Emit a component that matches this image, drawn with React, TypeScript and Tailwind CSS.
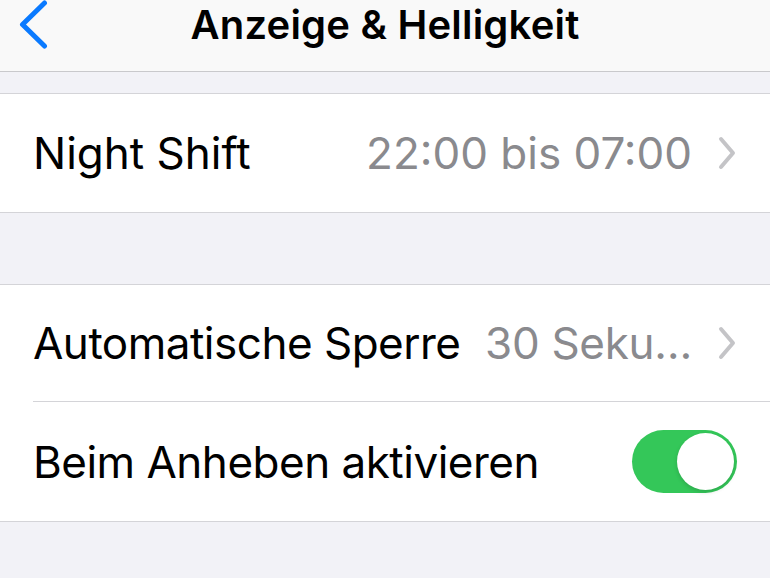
import React from "react";

function Chevron() {
  return (
    <svg width="20" height="34" viewBox="0 0 20 34" className="shrink-0">
      <path d="M4 3 L16 17 L4 31" fill="none" stroke="#c4c4c7" strokeWidth="4" strokeLinecap="round" strokeLinejoin="round" />
    </svg>
  );
}

export default function App() {
  return (
    <div className="w-[770px] h-[578px] overflow-hidden bg-[#f2f2f7] flex flex-col" style={{ fontFamily: "Inter, 'Noto Sans', sans-serif" }}>
      <div className="h-[72px] shrink-0 bg-[#f9f9f9] border-b border-[#c9c9cc] relative">
        <svg width="50" height="50" viewBox="0 0 50 50" className="absolute left-0 top-0">
          <path d="M44.5 3 L22.5 24.5 L44.5 46" fill="none" stroke="#0a7aff" strokeWidth="5" strokeLinecap="round" strokeLinejoin="round" />
        </svg>
        <div className="w-full text-center leading-[50px] text-[40px] font-semibold text-black tracking-[0.2px]">Anzeige &amp; Helligkeit</div>
      </div>
      <div className="h-[21px] shrink-0" />
      <div className="bg-white border-y border-[#d4d4d8] shrink-0">
        <div className="h-[118px] flex items-center pl-[33px] pr-[33px]">
          <span className="text-[44px] text-black tracking-[0px]">Night Shift</span>
          <span className="ml-auto text-[44px] text-[#8a8a8e] tracking-[0px] mr-[25px]">22:00 bis 07:00</span>
          <Chevron />
        </div>
      </div>
      <div className="h-[71px] shrink-0" />
      <div className="bg-white border-y border-[#d4d4d8] shrink-0">
        <div className="h-[116px] flex items-center pl-[33px] pr-[33px]">
          <span className="text-[44px] text-black tracking-[-0.5px]">Automatische Sperre</span>
          <span className="ml-auto text-[44px] text-[#8a8a8e] tracking-[-0.3px] mr-[25px]">30 Seku…</span>
          <Chevron />
        </div>
        <div className="ml-[33px] h-px bg-[#d4d4d8]" />
        <div className="h-[119px] flex items-center pl-[33px] pr-[33px]">
          <span className="text-[44px] text-black tracking-[-0.5px]">Beim Anheben aktivieren</span>
          <div className="ml-auto w-[105px] h-[63px] rounded-full bg-[#34c759] flex items-center justify-end pr-[3px]">
            <div className="w-[57px] h-[57px] rounded-full bg-white shadow-[0_2px_4px_rgba(0,0,0,0.15)]" />
          </div>
        </div>
      </div>
    </div>
  );
}
